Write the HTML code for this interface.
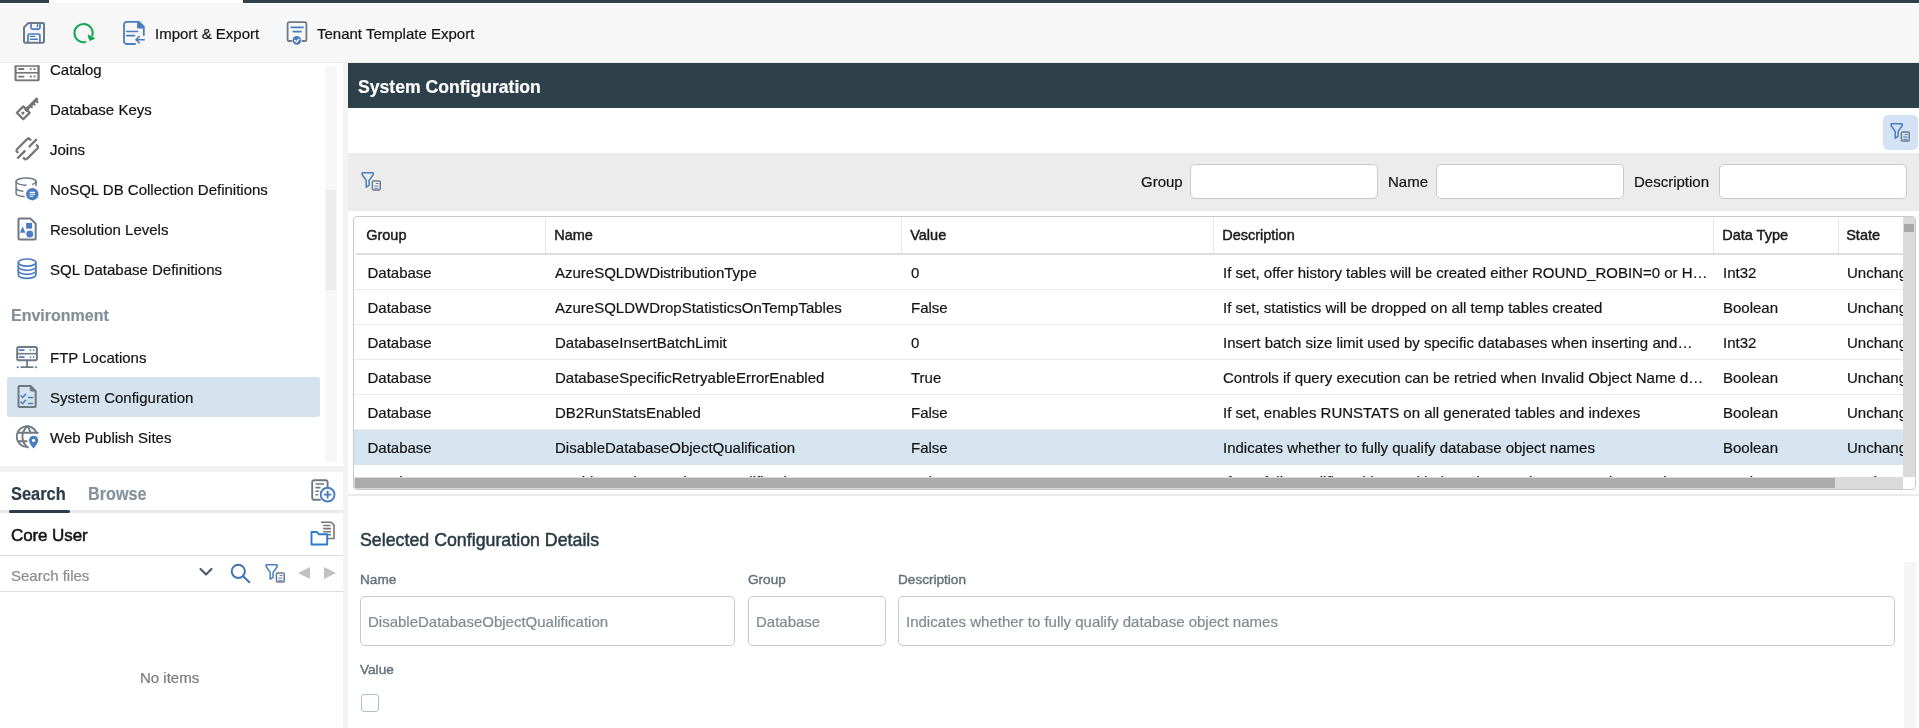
<!DOCTYPE html>
<html><head><meta charset="utf-8">
<style>
*{box-sizing:border-box;margin:0;padding:0}
html,body{width:1919px;height:728px;overflow:hidden;background:#fff;font-family:"Liberation Sans",sans-serif;color:#141414}
.a{position:absolute}
.t{position:absolute;white-space:nowrap;font-size:15px;line-height:18px;-webkit-text-stroke-width:0.2px}
svg{position:absolute;overflow:visible}
.ic{fill:none;stroke-linecap:round;stroke-linejoin:round}
.nv{left:50px;color:#141414}
.hd{position:absolute;top:1px;height:36px;width:1px;background:#e6e6e6}
.ht{position:absolute;top:9px;font-size:14.5px;line-height:18px;white-space:nowrap;color:#1a1a1a;-webkit-text-stroke:0.45px #1a1a1a}
.rl{position:absolute;left:355px;width:1548px;height:1px;background:#ececec}
.inp{position:absolute;background:#fff;border:1px solid #c9c9c9;border-radius:5px}
.rt{position:absolute;font-size:15px;line-height:18px;white-space:nowrap;color:#141414;-webkit-text-stroke-width:0.2px}
.lbl{position:absolute;font-size:13.6px;line-height:16px;color:#64717a;-webkit-text-stroke:0.4px #64717a;white-space:nowrap}
</style></head><body><div id="root" style="position:absolute;left:0;top:0;width:1919px;height:728px;overflow:hidden;background:#fff;will-change:transform">

<!-- top strip -->
<div class="a" style="left:0;top:0;width:1919px;height:3px;background:#2e4049"></div>
<div class="a" style="left:49px;top:0;width:194px;height:3px;background:#fff"></div>
<!-- toolbar -->
<div class="a" style="left:0;top:3px;width:1919px;height:59px;background:#f7f7f7"></div>
<div class="a" style="left:0;top:3px;width:49px;height:1px;background:#fff"></div>
<div class="a" style="left:243px;top:3px;width:1676px;height:1px;background:#fff"></div>
<div class="a" style="left:0;top:62px;width:1919px;height:1px;background:#ececec"></div>

<!-- toolbar icons -->
<svg style="left:0;top:0" width="320" height="50" viewBox="0 0 320 50">
 <path class="ic" d="M28.4 23H42.8a1.2 1.2 0 0 1 1.2 1.2V41.6a1.2 1.2 0 0 1-1.2 1.2H25.2a1.2 1.2 0 0 1-1.2-1.2V27.4Z" stroke="#6f7982" stroke-width="2"/>
 <path class="ic" d="M31 23.2V27.6a1.6 1.6 0 0 0 1.6 1.6H38.4a1.6 1.6 0 0 0 1.6-1.6V23.2" stroke="#4a7cc0" stroke-width="1.7"/>
 <path class="ic" d="M37.5 24.8V26.4" stroke="#4a7cc0" stroke-width="1.6"/>
 <path class="ic" d="M28 42.5V35.6a1.6 1.6 0 0 1 1.6-1.6H38.3a1.6 1.6 0 0 1 1.6 1.6V42.5" stroke="#4a7cc0" stroke-width="1.7"/>
 <path class="ic" d="M30.6 36.4H34.6M30.6 39.2H37.4" stroke="#4a7cc0" stroke-width="1.4"/>
 <path class="ic" d="M85.3 42A9.1 9.1 0 1 1 92.3 35.6" stroke="#12a84c" stroke-width="2"/>
 <path d="M88 35L94.6 38.4L89.8 40.4Z" fill="#12a84c" stroke="#12a84c" stroke-width="1" stroke-linejoin="round"/>
 <path class="ic" d="M135 44H126.6a2.6 2.6 0 0 1-2.6-2.6V24.4A2.6 2.6 0 0 1 126.6 21.8H139L143.8 26.6V35" stroke="#4a7cc0" stroke-width="1.8"/>
 <path d="M137.8 21.8V27.8H143.8Z" fill="#4a7cc0" stroke="#4a7cc0" stroke-width="1.4" stroke-linejoin="round"/>
 <path class="ic" d="M126.6 31.5H137.6M126.6 35.6H134.6" stroke="#4a7cc0" stroke-width="1.6"/>
 <path class="ic" d="M144.2 39.7H136.2M139.3 36.5L136 39.7L139.3 43" stroke="#4a7cc0" stroke-width="1.6"/>
 <path class="ic" d="M291.5 41H289.2a1.6 1.6 0 0 1-1.6-1.6V23.8A1.6 1.6 0 0 1 289.2 22.2H304.8A1.6 1.6 0 0 1 306.4 23.8V39.4a1.6 1.6 0 0 1-1.6 1.6H302.6" stroke="#6f7982" stroke-width="1.8"/>
 <path class="ic" d="M291.2 27.3H303M293.2 31.6H301" stroke="#4a7cc0" stroke-width="1.7"/>
 <circle cx="296.9" cy="40.4" r="4.3" fill="#4a7cc0"/>
 <path class="ic" d="M294.8 40.5L296.4 42L299 39.2" stroke="#fff" stroke-width="1.4"/>
</svg>
<div class="t" style="left:155px;top:24.5px">Import &amp; Export</div>
<div class="t" style="left:317px;top:24.5px">Tenant Template Export</div>

<!-- left nav panel -->
<div class="a" style="left:325px;top:66px;width:12px;height:396px;background:#f7f7f7"></div>
<div class="a" style="left:326px;top:190px;width:10px;height:100px;background:#ececec"></div>
<div class="a" style="left:7px;top:377px;width:313px;height:40px;background:#d5e3ef;border-radius:3px"></div>
<svg style="left:0;top:0" width="342" height="466" viewBox="0 0 342 466">
 <!-- catalog -->
 <path d="M14.5 65.2H39.7V79.6A1.6 1.6 0 0 1 38.1 81.2H16.1A1.6 1.6 0 0 1 14.5 79.6Z" fill="#757575"/>
 <rect x="16.6" y="66.8" width="20.8" height="5.2" fill="#fff"/>
 <rect x="16.6" y="73.6" width="20.8" height="5.8" fill="#fff"/>
 <path d="M19 69H23.4M19 76.6H23.4" stroke="#757575" stroke-width="1.9" stroke-linecap="round"/>
 <circle cx="30.8" cy="69" r="1.1" fill="#757575"/><circle cx="34.5" cy="69" r="1.1" fill="#757575"/>
 <circle cx="30.8" cy="76.6" r="1.1" fill="#757575"/><circle cx="34.5" cy="76.6" r="1.1" fill="#757575"/>
 <!-- key -->
 <path d="M16.9 112.8L23.3 106.4L29.7 112.8L23.3 119.2Z" fill="none" stroke="#757575" stroke-width="2.3" stroke-linejoin="round"/>
 <circle cx="22.9" cy="113.1" r="1.6" fill="#757575"/>
 <path d="M26.3 109.6L36.6 99.3" stroke="#757575" stroke-width="3.2" stroke-linecap="round"/>
 <path d="M25.5 108.5L28.2 111.2" stroke="#757575" stroke-width="3.4"/>
 <path d="M35.6 100.3L37.6 102.3M32.9 103L34.6 104.7M30.3 105.6L31.9 107.2" stroke="#757575" stroke-width="2" stroke-linecap="round"/>
 <!-- joins -->
 <path class="ic" d="M17.6 152.3A2 2 0 0 1 17 149.2L27 139.2A2 2 0 0 1 30.4 139.9" stroke="#757575" stroke-width="2.3"/>
 <path class="ic" d="M36.8 145.3A2 2 0 0 1 37.6 148.2L27.2 158.6A2 2 0 0 1 23.8 158" stroke="#757575" stroke-width="2.3"/>
 <path class="ic" d="M17.9 157.8L24.7 151.2M29.4 146.5L36.1 139.9" stroke="#757575" stroke-width="2.3"/>
 <!-- nosql -->
 <ellipse cx="26.1" cy="181.6" rx="10" ry="3.6" fill="none" stroke="#6f7982" stroke-width="1.5"/>
 <rect x="26.6" y="183.5" width="5.6" height="4" fill="#fff"/>
 <path class="ic" d="M16.1 181.6V193.6C16.1 195 19 196.2 24 196.6M16.1 187.8C16.1 189.4 19 190.8 22.8 191.2M36.1 181.6V185.8" stroke="#6f7982" stroke-width="1.5"/>
 <circle cx="32.3" cy="194.2" r="6.2" fill="#4a7cc0"/>
 <path d="M29.6 192.4H35M29.6 194.3H35M29.6 196.2H33.3" stroke="#fff" stroke-width="1.1"/>
 <!-- resolution -->
 <path d="M19.8 218.6H30.6L35.7 223.7V238.4A1 1 0 0 1 34.7 239.4H19.5A1 1 0 0 1 18.5 238.4V219.6A1 1 0 0 1 19.5 218.6Z" fill="none" stroke="#6f7982" stroke-width="2" stroke-linejoin="round"/>
 <rect x="26.1" y="222.9" width="6" height="5.7" fill="#4a7cc0"/>
 <path d="M19.9 232.8L22.7 226.6L25.5 232.8Z" fill="#4a7cc0"/>
 <circle cx="29.8" cy="234.1" r="4" fill="#4a7cc0" stroke="#fff" stroke-width="0.8"/>
 <!-- sql -->
 <ellipse cx="27.1" cy="262.6" rx="8.8" ry="3.6" fill="none" stroke="#4a7cc0" stroke-width="1.7"/>
 <path class="ic" d="M18.3 262.6V274.8C18.3 276.9 22.2 278.4 27.1 278.4S35.9 276.9 35.9 274.8V262.6" stroke="#4a7cc0" stroke-width="1.7"/>
 <path class="ic" d="M18.3 266.8C18.3 268.8 22.2 270.3 27.1 270.3S35.9 268.8 35.9 266.8M18.3 270.8C18.3 272.8 22.2 274.3 27.1 274.3S35.9 272.8 35.9 270.8" stroke="#4a7cc0" stroke-width="1.7"/>
 <!-- ftp -->
 <rect x="17.2" y="347" width="19.7" height="13.2" rx="1.6" fill="none" stroke="#6f7982" stroke-width="2"/>
 <path d="M17.2 353.7H36.9" stroke="#6f7982" stroke-width="1.6"/>
 <path d="M27.1 361V366.5M20.6 367.2H33.4" stroke="#6f7982" stroke-width="1.8"/>
 <path d="M19.6 350.1H23.9M19.6 357.1H23.9" stroke="#4a7cc0" stroke-width="1.7" stroke-linecap="round"/>
 <circle cx="30.4" cy="350.1" r="0.9" fill="#4a7cc0"/><circle cx="33.6" cy="350.1" r="0.9" fill="#4a7cc0"/>
 <circle cx="30.4" cy="357.1" r="0.9" fill="#4a7cc0"/><circle cx="33.6" cy="357.1" r="0.9" fill="#4a7cc0"/>
 <rect x="16.8" y="366.3" width="1.8" height="1.8" fill="#4a7cc0"/><rect x="35.1" y="366.3" width="1.8" height="1.8" fill="#4a7cc0"/>
 <!-- sysconf -->
 <path d="M19.5 386H30.6L35.7 391.1V406A1 1 0 0 1 34.7 407H19.5A1 1 0 0 1 18.5 406V387A1 1 0 0 1 19.5 386Z" fill="none" stroke="#6f7982" stroke-width="2" stroke-linejoin="round"/>
 <path d="M30.2 386.4V389.6A1.5 1.5 0 0 0 31.7 391.1H35.4Z" fill="#6f7982" stroke="#6f7982" stroke-width="1"/>
 <path class="ic" d="M21 395.9L22.7 397.5L25.6 394.2M21 402L22.7 403.6L25.6 400.3" stroke="#4a7cc0" stroke-width="1.5"/>
 <path d="M28.5 397.5H32.6M28.5 403.5H32.6" stroke="#4a7cc0" stroke-width="1.5" stroke-linecap="round"/>
 <!-- web -->
 <path class="ic" d="M36.65 433A10.3 10.3 0 1 0 27.8 446.87" stroke="#6f7982" stroke-width="1.9"/>
 <path class="ic" d="M18.2 432.7H37.8M18.2 441.2H26.6" stroke="#6f7982" stroke-width="1.9"/>
 <path class="ic" d="M27.3 426.2C24 429.2 22.4 432.6 22.4 436.5S24 444.2 27.4 447.4" stroke="#6f7982" stroke-width="1.9"/>
 <path class="ic" d="M27.3 426.2C28.6 427.6 29.6 429.6 30.2 432" stroke="#6f7982" stroke-width="1.9"/>
 <path d="M33.6 448.6C31.2 445.6 29 443.2 29 440.3A4.6 4.6 0 0 1 38.2 440.3C38.2 443.2 36 445.6 33.6 448.6Z" fill="#4a7cc0"/>
 <circle cx="33.6" cy="440.4" r="1.6" fill="#fff"/>
</svg>
<div class="t nv" style="top:61px">Catalog</div>
<div class="t nv" style="top:101px">Database Keys</div>
<div class="t nv" style="top:141px">Joins</div>
<div class="t nv" style="top:181px">NoSQL DB Collection Definitions</div>
<div class="t nv" style="top:221px">Resolution Levels</div>
<div class="t nv" style="top:261px">SQL Database Definitions</div>
<div class="t" style="left:11px;top:306px;font-size:16px;line-height:20px;font-weight:bold;color:#858f97;transform:scaleY(1.08);transform-origin:0 100%">Environment</div>
<div class="t nv" style="top:349px">FTP Locations</div>
<div class="t nv" style="top:389px">System Configuration</div>
<div class="t nv" style="top:429px">Web Publish Sites</div>

<!-- strip between -->
<div class="a" style="left:343px;top:63px;width:5px;height:665px;background:#f3f3f3"></div>
<div class="a" style="left:0;top:466px;width:343px;height:6px;background:#f2f2f2"></div>

<!-- bottom-left: tabs -->
<div class="t" style="left:11px;top:484px;font-size:16.4px;line-height:20px;font-weight:bold;color:#2d3e4a;transform:scaleY(1.1);transform-origin:0 100%">Search</div>
<div class="t" style="left:88px;top:484px;font-size:16.2px;line-height:20px;font-weight:bold;color:#87929a;transform:scaleY(1.1);transform-origin:0 100%">Browse</div>
<div class="a" style="left:0;top:510px;width:343px;height:3px;background:#ebebeb"></div>
<div class="a" style="left:9px;top:510px;width:61px;height:3px;background:#2d3e4a;border-radius:2px"></div>
<svg style="left:310.5px;top:478.5px" width="26" height="24" viewBox="0 0 26 24">
 <path class="ic" d="M9 20.8H3.2A2 2 0 0 1 1.2 18.8V3.2A2 2 0 0 1 3.2 1.2H14.6A2 2 0 0 1 16.6 3.2V8" stroke="#6f7982" stroke-width="1.9"/>
 <path d="M4.5 5H13M4.5 8.6H9.5M4.5 12.2H8M4.5 15.8H7" stroke="#6f7982" stroke-width="1.6"/>
 <circle cx="16.6" cy="15.6" r="6.9" fill="#fff" stroke="#4a7cc0" stroke-width="1.9"/>
 <path d="M16.6 11.8V19.4M12.8 15.6H20.4" stroke="#4a7cc0" stroke-width="1.9"/>
</svg>
<div class="t" style="left:11px;top:525.5px;font-size:17px;line-height:20px;color:#111;letter-spacing:-0.1px;-webkit-text-stroke:0.5px #111">Core User</div>
<svg style="left:310px;top:521px" width="26" height="26" viewBox="0 0 26 26">
 <path d="M11 1.2H21L24 4.2V17.5H16.5" fill="none" stroke="#777" stroke-width="1.6"/>
 <path d="M13.2 4.5H20.5M13.2 7.6H21M13.2 10.7H21M16.5 13.8H21" stroke="#777" stroke-width="1.6"/>
 <path d="M1.5 11H7L9 13.3H17.2V23.5H1.5Z" fill="#fff" stroke="#2d7ac9" stroke-width="1.9" stroke-linejoin="round"/>
</svg>
<div class="a" style="left:0;top:555px;width:343px;height:1px;background:#dcdcdc"></div>
<div class="t" style="left:11px;top:567px;color:#8b8b8b">Search files</div>
<svg style="left:199px;top:567px" width="14" height="10" viewBox="0 0 14 10">
 <path class="ic" d="M1.5 2L7 7.5L12.5 2" stroke="#4f5e68" stroke-width="2.2"/>
</svg>
<svg style="left:230px;top:563px" width="21" height="21" viewBox="0 0 21 21">
 <circle cx="8.3" cy="8.3" r="6.6" fill="none" stroke="#3f74b8" stroke-width="2"/>
 <path d="M13.2 13.2L19.3 19.3" stroke="#3f74b8" stroke-width="2" stroke-linecap="round"/>
</svg>
<svg style="left:264px;top:563px" width="23" height="22" viewBox="0 0 23 22">
 <path class="ic" d="M2.2 1.8H13.1V3.7L9.1 9.4V14.3L6.2 16.2V9.4L2.2 3.7Z" stroke="#4a7cc0" stroke-width="1.5"/>
 <rect x="12.4" y="10.1" width="7.8" height="8.9" rx="1" fill="#fff" stroke="#6f7982" stroke-width="1.5"/>
 <path d="M15.6 12.5H18.5M14.2 15H18.5M14.2 17.3H18.5" stroke="#4a7cc0" stroke-width="1"/>
</svg>
<svg style="left:297px;top:566px" width="14" height="14" viewBox="0 0 14 14"><path d="M13 1V13L1 7Z" fill="#c2c2c2"/></svg>
<svg style="left:323px;top:566px" width="14" height="14" viewBox="0 0 14 14"><path d="M1 1V13L13 7Z" fill="#c2c2c2"/></svg>
<div class="a" style="left:0;top:591px;width:343px;height:1px;background:#dcdcdc"></div>
<div class="t" style="left:140px;top:669px;color:#7a7a7a">No items</div>

<!-- main header -->
<div class="a" style="left:348px;top:63px;width:1571px;height:45px;background:#2e4049"></div>
<div class="t" style="left:358px;top:76px;font-size:17.6px;line-height:22px;font-weight:bold;color:#fff;transform:scaleY(1.07);transform-origin:0 100%">System Configuration</div>

<!-- filter toggle -->
<div class="a" style="left:1883px;top:115px;width:35px;height:35px;background:#d3e3f5;border-radius:5px"></div>
<svg style="left:1889px;top:122px" width="23" height="22" viewBox="0 0 23 22">
 <path class="ic" d="M2.2 1.8H13.1V3.7L9.1 9.4V14.3L6.2 16.2V9.4L2.2 3.7Z" stroke="#4a7cc0" stroke-width="1.5"/>
 <rect x="12.4" y="10.1" width="7.8" height="8.9" rx="1" fill="#d3e3f5" stroke="#6f7982" stroke-width="1.5"/>
 <path d="M15.6 12.5H18.5M14.2 15H18.5M14.2 17.3H18.5" stroke="#4a7cc0" stroke-width="1"/>
</svg>

<!-- filter bar -->
<div class="a" style="left:348px;top:153px;width:1571px;height:58px;background:#ececec"></div>
<svg style="left:360px;top:171px" width="23" height="22" viewBox="0 0 23 22">
 <path class="ic" d="M2.2 1.8H13.1V3.7L9.1 9.4V14.3L6.2 16.2V9.4L2.2 3.7Z" stroke="#4a7cc0" stroke-width="1.5"/>
 <rect x="12.4" y="10.1" width="7.8" height="8.9" rx="1" fill="#fafafa" stroke="#6f7982" stroke-width="1.5"/>
 <path d="M15.6 12.5H18.5M14.2 15H18.5M14.2 17.3H18.5" stroke="#4a7cc0" stroke-width="1"/>
</svg>
<div class="t" style="left:1141px;top:173px">Group</div>
<div class="inp" style="left:1190px;top:164px;width:188px;height:35px"></div>
<div class="t" style="left:1388px;top:173px">Name</div>
<div class="inp" style="left:1436px;top:164px;width:188px;height:35px"></div>
<div class="t" style="left:1634px;top:173px">Description</div>
<div class="inp" style="left:1719px;top:164px;width:188px;height:35px"></div>

<!-- grid -->
<div class="a" style="left:353px;top:216px;width:1563px;height:274px;border:1px solid #c9c9c9;border-radius:4px;background:#fff"></div>
<div class="a" style="left:354px;top:217px;width:1549px;height:260px;overflow:hidden">
<div class="ht" style="left:12.2px">Group</div>
<div class="ht" style="left:200.2px">Name</div>
<div class="ht" style="left:556.2px">Value</div>
<div class="ht" style="left:868.2px">Description</div>
<div class="ht" style="left:1368.2px">Data Type</div>
<div class="ht" style="left:1492.2px">State</div>
<div class="hd" style="left:191px"></div>
<div class="hd" style="left:547px"></div>
<div class="hd" style="left:859px"></div>
<div class="hd" style="left:1359px"></div>
<div class="hd" style="left:1484px"></div>
<div class="a" style="left:2px;top:36px;width:1547px;height:2px;background:#dedede"></div>
<div class="a" style="left:0;top:72px;width:1549px;height:1px;background:#ebebeb"></div>
<div class="rt" style="left:13.5px;top:47px">Database</div>
<div class="rt" style="left:201px;top:47px">AzureSQLDWDistributionType</div>
<div class="rt" style="left:557px;top:47px">0</div>
<div class="rt" style="left:869px;top:47px">If set, offer history tables will be created either ROUND_ROBIN=0 or H…</div>
<div class="rt" style="left:1369px;top:47px">Int32</div>
<div class="rt" style="left:1493px;top:47px">Unchanged</div>
<div class="a" style="left:0;top:107px;width:1549px;height:1px;background:#ebebeb"></div>
<div class="rt" style="left:13.5px;top:82px">Database</div>
<div class="rt" style="left:201px;top:82px">AzureSQLDWDropStatisticsOnTempTables</div>
<div class="rt" style="left:557px;top:82px">False</div>
<div class="rt" style="left:869px;top:82px">If set, statistics will be dropped on all temp tables created</div>
<div class="rt" style="left:1369px;top:82px">Boolean</div>
<div class="rt" style="left:1493px;top:82px">Unchanged</div>
<div class="a" style="left:0;top:142px;width:1549px;height:1px;background:#ebebeb"></div>
<div class="rt" style="left:13.5px;top:117px">Database</div>
<div class="rt" style="left:201px;top:117px">DatabaseInsertBatchLimit</div>
<div class="rt" style="left:557px;top:117px">0</div>
<div class="rt" style="left:869px;top:117px">Insert batch size limit used by specific databases when inserting and…</div>
<div class="rt" style="left:1369px;top:117px">Int32</div>
<div class="rt" style="left:1493px;top:117px">Unchanged</div>
<div class="a" style="left:0;top:177px;width:1549px;height:1px;background:#ebebeb"></div>
<div class="rt" style="left:13.5px;top:152px">Database</div>
<div class="rt" style="left:201px;top:152px">DatabaseSpecificRetryableErrorEnabled</div>
<div class="rt" style="left:557px;top:152px">True</div>
<div class="rt" style="left:869px;top:152px">Controls if query execution can be retried when Invalid Object Name d…</div>
<div class="rt" style="left:1369px;top:152px">Boolean</div>
<div class="rt" style="left:1493px;top:152px">Unchanged</div>
<div class="a" style="left:0;top:212px;width:1549px;height:1px;background:#ebebeb"></div>
<div class="rt" style="left:13.5px;top:187px">Database</div>
<div class="rt" style="left:201px;top:187px">DB2RunStatsEnabled</div>
<div class="rt" style="left:557px;top:187px">False</div>
<div class="rt" style="left:869px;top:187px">If set, enables RUNSTATS on all generated tables and indexes</div>
<div class="rt" style="left:1369px;top:187px">Boolean</div>
<div class="rt" style="left:1493px;top:187px">Unchanged</div>
<div class="a" style="left:0;top:213px;width:1549px;height:35px;background:#d6e4ef"></div>
<div class="rt" style="left:13.5px;top:222px">Database</div>
<div class="rt" style="left:201px;top:222px">DisableDatabaseObjectQualification</div>
<div class="rt" style="left:557px;top:222px">False</div>
<div class="rt" style="left:869px;top:222px">Indicates whether to fully qualify database object names</div>
<div class="rt" style="left:1369px;top:222px">Boolean</div>
<div class="rt" style="left:1493px;top:222px">Unchanged</div>
<div class="a" style="left:0;top:282px;width:1549px;height:1px;background:#ebebeb"></div>
<div class="rt" style="left:13.5px;top:256px">Database</div>
<div class="rt" style="left:201px;top:256px">EnableDatabaseSchemaQualification</div>
<div class="rt" style="left:557px;top:256px">False</div>
<div class="rt" style="left:869px;top:256px">If set, fully qualifies objects with the schema when generating queries</div>
<div class="rt" style="left:1369px;top:256px">Boolean</div>
<div class="rt" style="left:1493px;top:256px">Unchanged</div>
</div>
<div class="a" style="left:1903px;top:217px;width:12px;height:260px;background:#dadada"></div>
<div class="a" style="left:1904px;top:224px;width:10px;height:8px;background:#a9a9a9"></div>
<div class="a" style="left:354px;top:477px;width:1549px;height:12px;background:#dadada"></div>
<div class="a" style="left:355px;top:478px;width:1480px;height:10px;background:#acacac"></div>

<!-- details -->
<div class="a" style="left:348px;top:494px;width:1571px;height:2px;background:#ebebeb"></div>
<div class="t" style="left:360px;top:529px;font-size:17.8px;line-height:22px;color:#2b3b45;-webkit-text-stroke:0.5px #2b3b45">Selected Configuration Details</div>
<div class="lbl" style="left:360px;top:572px">Name</div>
<div class="lbl" style="left:748px;top:572px">Group</div>
<div class="lbl" style="left:898px;top:572px">Description</div>
<div class="inp" style="left:360px;top:596px;width:375px;height:50px"></div>
<div class="t" style="left:368px;top:613px;color:#7f8a92">DisableDatabaseObjectQualification</div>
<div class="inp" style="left:748px;top:596px;width:138px;height:50px"></div>
<div class="t" style="left:756px;top:613px;color:#7f8a92">Database</div>
<div class="inp" style="left:898px;top:596px;width:997px;height:50px"></div>
<div class="t" style="left:906px;top:613px;color:#7f8a92">Indicates whether to fully qualify database object names</div>
<div class="lbl" style="left:360px;top:662px">Value</div>
<div class="a" style="left:361px;top:694px;width:18px;height:18px;border:1px solid #afc1d1;border-radius:3px;background:#fff"></div>
<div class="a" style="left:1904px;top:562px;width:12px;height:166px;background:#f5f5f5"></div>
</div></body></html>
